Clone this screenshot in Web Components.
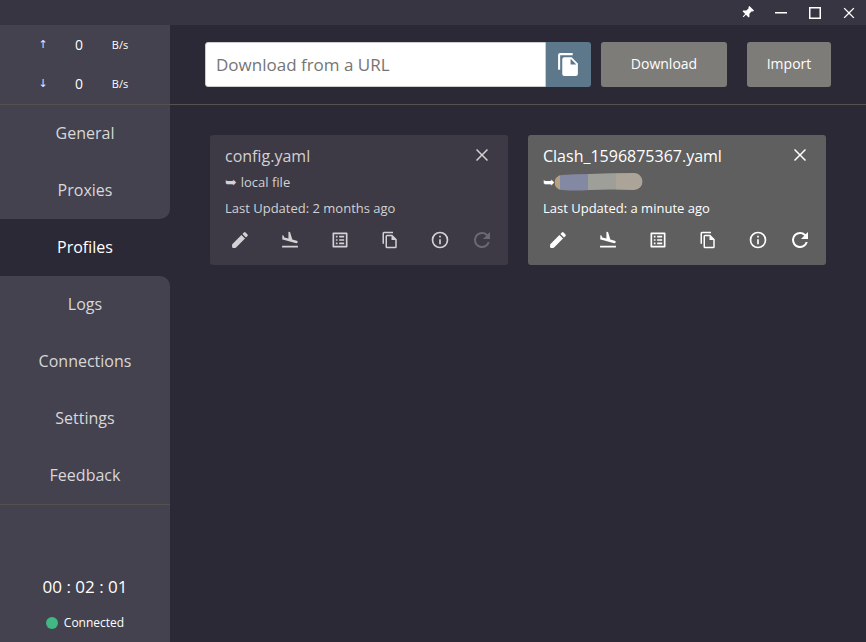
<!DOCTYPE html>
<html lang="en">
<head>
<meta charset="utf-8">
<title>Profiles</title>
<style>
html, body { margin: 0; height: 100%; background: #2c2936; }
body { font-family: "Open Sans", "Noto Sans", "DejaVu Sans", sans-serif; color: #fff; }
</style>
</head>
<body>
<clash-app></clash-app>
<script>
const icons = {
  pin: '<g transform="rotate(45 12 12)"><path d="M6 1h12v2.500l-2 1.500v6l4 4v2h-7v6l-1 1-1-1v-6H4v-2l4-4V5L6 3.500z"/></g>',
  minimize: '<path d="M0 10h24v3H0z"/>',
  maximize: '<path d="M0 0h24v24H0zm3 3v18h18V3z" fill-rule="evenodd"/>',
  close: '<path d="M20 5.400L18.600 4 12 10.600 5.400 4 4 5.400 10.600 12 4 18.600 5.400 20 12 13.400 18.600 20 20 18.600 13.400 12z"/>',
  paste: '<path d="M16 1H4a2 2 0 0 0-2 2v14h2V3h12zm-1 4H8a2 2 0 0 0-2 2v14a2 2 0 0 0 2 2h11a2 2 0 0 0 2-2V11zm-1 7V6.500l5.500 5.500z"/>',
  edit: '<path d="M2.500 18.200v2.300q0 1 1 1h2.600q.7 0 1.200-.5L18 10.300 13.700 6 3 16.800q-.5.600-.5 1.400zM14.900 4.800l4.300 4.300 1.800-1.800q1-1 0-2l-2.300-2.300q-1-1-2 0z"/>',
  land: '<path d="M2.500 19h19v2h-19zm7.180-5.730 4.350 1.160 5.310 1.420c.8.210 1.620-.260 1.840-1.060.210-.8-.260-1.620-1.060-1.840l-5.310-1.420-2.760-9.020L10.120 2v8.280L5.150 8.950l-.93-2.320-1.450-.390v5.170l1.600.430z"/>',
  list: '<path d="M19 5v14H5V5zm1.100-2H3.900c-.5 0-.9.400-.9.900v16.200c0 .4.400.9.900.9h16.200c.4 0 .9-.5.9-.9V3.900c0-.5-.5-.9-.9-.9zM11 7h6v2h-6zm0 4h6v2h-6zm0 4h6v2h-6zM7 7h2v2H7zm0 4h2v2H7zm0 4h2v2H7z"/>',
  copy: '<path d="M16 1H4a2 2 0 0 0-2 2v14h2V3h12zm-1 4H8a2 2 0 0 0-2 2v14a2 2 0 0 0 2 2h11a2 2 0 0 0 2-2V11zM8 21V7h6v5h5v9z" fill-rule="evenodd"/>',
  info: '<path d="M11 7h2v2h-2zm0 4h2v6h-2zm1-9a10 10 0 1 0 0 20 10 10 0 0 0 0-20zm0 18a8 8 0 1 1 0-16 8 8 0 0 1 0 16z"/>',
  refresh: '<path d="M17.650 6.350A7.960 7.960 0 0 0 12 4a8 8 0 1 0 7.730 10h-2.080A6 6 0 1 1 12 6c1.660 0 3.140.690 4.220 1.780L13 11h7V4z"/>'
};

function attach(el, markup) {
  const t = document.createElement('template');
  t.innerHTML = markup;
  el.attachShadow({ mode: 'open' }).append(t.content.cloneNode(true));
}

const buttonReset = 'button { font: inherit; color: inherit; border: 0; padding: 0; margin: 0; background: none; cursor: pointer; }';

customElements.define('ui-icon', class extends HTMLElement {
  connectedCallback() {
    if (this.shadowRoot) return;
    attach(this, `<style>
      :host { display: block; width: var(--icon-size, 20px); height: var(--icon-size, 20px); }
      svg { display: block; width: 100%; height: 100%; fill: currentColor; }
    </style><svg viewBox="0 0 24 24" aria-hidden="true">${icons[this.getAttribute('name')]}</svg>`);
  }
});

customElements.define('window-bar', class extends HTMLElement {
  connectedCallback() {
    attach(this, `<style>
      :host { display: flex; justify-content: flex-end; height: 25px; background: #373542; --icon-size: 12px; }
      ${buttonReset}
      button { width: 34px; display: grid; place-items: center; }
      .x { --icon-size: 16px; }
      .pin { --icon-size: 13px; }
    </style>
    <button class="pin" aria-label="Pin"><ui-icon name="pin"></ui-icon></button>
    <button aria-label="Minimize"><ui-icon name="minimize"></ui-icon></button>
    <button aria-label="Maximize"><ui-icon name="maximize"></ui-icon></button>
    <button class="x" aria-label="Close"><ui-icon name="close"></ui-icon></button>`);
  }
});

customElements.define('traffic-rate', class extends HTMLElement {
  connectedCallback() {
    attach(this, `<style>
      :host { display: grid; grid-template-columns: 18px 18px 28px; justify-content: center; column-gap: 18px; padding-right: 2px; align-items: center; text-align: center; font-size: 14px; line-height: 40px; height: 39px; }
      .arrow { font: 11px/40px "DejaVu Sans", sans-serif; color: #f3dcff; }
      .unit { font-size: 11px; }
    </style><span class="arrow"><slot name="arrow"></slot></span><span><slot></slot></span><span class="unit">B/s</span>`);
  }
});

customElements.define('nav-item', class extends HTMLElement {
  connectedCallback() {
    attach(this, `<style>
      :host { display: block; background: #43424e; color: #d8d7d9; }
      :host([active]) { background: #2c2936; color: #fff; }
      :host([before]) { border-bottom-right-radius: 10px; }
      :host([after]) { border-top-right-radius: 10px; }
      a { display: block; color: inherit; text-decoration: none; text-align: center; font-size: 16px; line-height: 57px; }
    </style><a href="#"><slot></slot></a>`);
  }
});

customElements.define('side-bar', class extends HTMLElement {
  connectedCallback() {
    attach(this, `<style>
      :host { display: flex; flex-direction: column; }
      .traffic { background: #43424e; height: 79px; border-bottom: 1px solid #56504f; }
      .status { flex: 1; background: #43424e; border-top: 1px solid #56504f; display: flex; flex-direction: column; justify-content: flex-end; align-items: center; gap: 14px; padding-bottom: 9px; }
      .time { font-size: 17px; line-height: 24px; }
      .link { display: flex; align-items: center; gap: 6px; font-size: 12px; line-height: 20px; }
      .dot { width: 12px; height: 12px; border-radius: 50%; background: #41b883; }
    </style>
    <div class="traffic">
      <traffic-rate><span slot="arrow">↑</span>0</traffic-rate>
      <traffic-rate><span slot="arrow">↓</span>0</traffic-rate>
    </div>
    <nav>
      <nav-item>General</nav-item>
      <nav-item before>Proxies</nav-item>
      <nav-item active>Profiles</nav-item>
      <nav-item after>Logs</nav-item>
      <nav-item>Connections</nav-item>
      <nav-item>Settings</nav-item>
      <nav-item>Feedback</nav-item>
    </nav>
    <div class="status">
      <div class="time">00 : 02 : 01</div>
      <div class="link"><span class="dot"></span><span>Connected</span></div>
    </div>`);
  }
});

customElements.define('download-bar', class extends HTMLElement {
  connectedCallback() {
    attach(this, `<style>
      :host { display: flex; height: 45px; padding: 17px 35px; border-bottom: 1px solid #56504f; font-size: 14px; }
      ${buttonReset}
      input { flex: 1; min-width: 0; box-sizing: border-box; margin: 0; padding: 0 10px; border: 1px solid #ccc; border-radius: 3px 0 0 3px; background: #fff; color: #333; font: 17px "Open Sans", sans-serif; outline: 0; }
      input::placeholder { color: #757575; opacity: 1; }
      .paste { width: 45px; display: grid; place-items: center; background: #5d788b; border-radius: 0 3px 3px 0; --icon-size: 25px; }
      .action { background: #7e7c79; border-radius: 3px; padding-bottom: 3px; }
      .download { width: 126px; margin-left: 10px; }
      .import { width: 84px; margin-left: 20px; }
    </style>
    <input type="text" placeholder="Download from a URL" aria-label="Download from a URL">
    <button class="paste" aria-label="Paste"><ui-icon name="paste"></ui-icon></button>
    <button class="action download">Download</button>
    <button class="action import">Import</button>`);
  }
});

customElements.define('profile-card', class extends HTMLElement {
  connectedCallback() {
    attach(this, `<style>
      :host { display: block; box-sizing: border-box; padding: 8px 9px 6px 5px; border-radius: 3px; background: #3d3a45; color: #d2d1d3; }
      :host([active]) { background: #5f5f5f; color: #fff; }
      ${buttonReset}
      button { display: grid; place-items: center; }
      header { display: flex; justify-content: space-between; align-items: center; padding-left: 10px; }
      h2 { margin: 0; font-size: 16px; font-weight: 400; line-height: 26px; }
      .close { width: 34px; --icon-size: 18px; padding-bottom: 2px; }
      p { margin: 0; padding-left: 10px; font-size: 13px; line-height: 26px; }
      .source { display: flex; align-items: center; gap: 4px; }
      :host([active]) .source { gap: 0; }
      .mark { font: 14px/26px "DejaVu Sans", sans-serif; }
      .tools { display: grid; grid-template-columns: repeat(5, 1fr) 34px; height: 38px; }
      .copy { --icon-size: 18px; }
      .refresh { --icon-size: 24px; }
      :host(:not([active])) .refresh { opacity: .3; }
    </style>
    <header><h2><slot name="title"></slot></h2><button class="close" aria-label="Delete"><ui-icon name="close"></ui-icon></button></header>
    <p class="source"><span class="mark">➥</span><slot name="source"></slot></p>
    <p>Last Updated: <slot name="updated"></slot></p>
    <div class="tools">
      <button aria-label="Edit"><ui-icon name="edit"></ui-icon></button>
      <button aria-label="Open"><ui-icon name="land"></ui-icon></button>
      <button aria-label="Rules"><ui-icon name="list"></ui-icon></button>
      <button class="copy" aria-label="Duplicate"><ui-icon name="copy"></ui-icon></button>
      <button aria-label="Information"><ui-icon name="info"></ui-icon></button>
      <button class="refresh" aria-label="Update"><ui-icon name="refresh"></ui-icon></button>
    </div>`);
  }
});

customElements.define('clash-app', class extends HTMLElement {
  connectedCallback() {
    attach(this, `<style>
      :host { display: grid; grid-template: auto 1fr / 170px 1fr; min-height: 100vh; background: #2c2936; }
      window-bar { grid-column: 1 / -1; }
      .cards { display: grid; grid-template-columns: 1fr 1fr; gap: 20px; padding: 30px 40px; align-items: start; }
      svg { display: block; }
    </style>
    <window-bar></window-bar>
    <side-bar></side-bar>
    <main>
      <download-bar></download-bar>
      <section class="cards">
        <profile-card>
          <span slot="title">config.yaml</span>
          <span slot="source">local file</span>
          <span slot="updated">2 months ago</span>
        </profile-card>
        <profile-card active>
          <span slot="title">Clash_1596875367.yaml</span>
          <svg slot="source" width="88" height="18" viewBox="0 0 88 18" aria-hidden="true">
            <defs><clipPath id="pill"><path d="M7 2Q20 1 34 1Q55 0 79 0A8 8 0 0 1 79 17Q55 16 34 17Q20 18 7 17A7 7 0 0 1 7 2z"/></clipPath></defs>
            <g clip-path="url(#pill)"><path fill="#b1a286" d="M0 0h5v18H0z"/><path fill="#8388a3" d="M5 0h28v18H5z"/><path fill="#9f9f9a" d="M33 0h28v18H33z"/><path fill="#aca498" d="M61 0h27v18H61z"/></g>
          </svg>
          <span slot="updated">a minute ago</span>
        </profile-card>
      </section>
    </main>`);
  }
});
</script>
</body>
</html>
